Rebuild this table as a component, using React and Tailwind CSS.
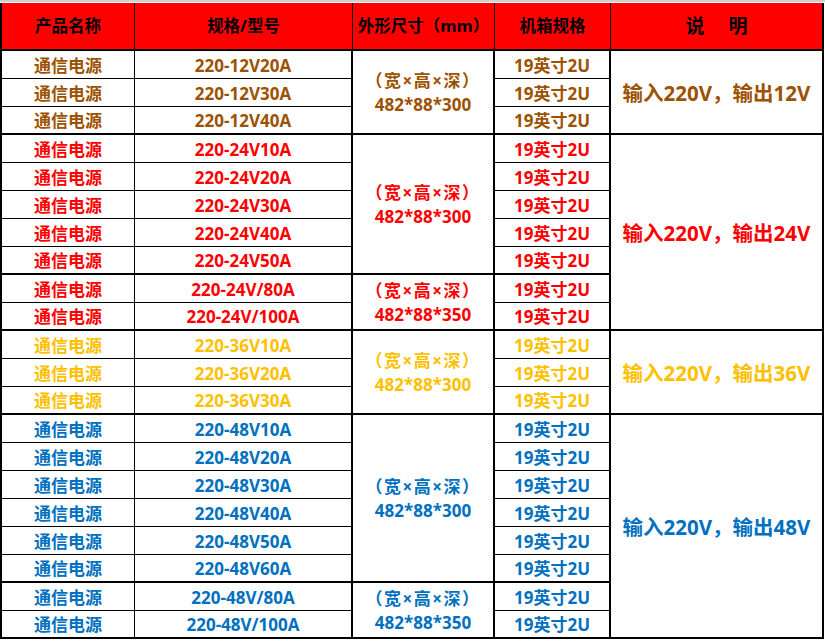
const groups = [
  {
    color: 'text-[#9c5200]',
    note: '输入220V，输出12V',
    subs: [{ span: 'row-span-3', depth: '300', models: ['220-12V20A', '220-12V30A', '220-12V40A'] }],
  },
  {
    color: 'text-[#ff0000]',
    note: '输入220V，输出24V',
    subs: [
      { span: 'row-span-5', depth: '300', models: ['220-24V10A', '220-24V20A', '220-24V30A', '220-24V40A', '220-24V50A'] },
      { span: 'row-span-2', depth: '350', models: ['220-24V/80A', '220-24V/100A'] },
    ],
  },
  {
    color: 'text-[#ffc000]',
    note: '输入220V，输出36V',
    subs: [{ span: 'row-span-3', depth: '300', models: ['220-36V10A', '220-36V20A', '220-36V30A'] }],
  },
  {
    color: 'text-[#0070c0]',
    note: '输入220V，输出48V',
    subs: [
      { span: 'row-span-6', depth: '300', models: ['220-48V10A', '220-48V20A', '220-48V30A', '220-48V40A', '220-48V50A', '220-48V60A'] },
      { span: 'row-span-2', depth: '350', models: ['220-48V/80A', '220-48V/100A'] },
    ],
  },
];

const noteSpan = { 3: 'row-span-3', 7: 'row-span-7', 8: 'row-span-8' };

const head = 'flex items-center justify-center bg-[#ff0000] text-black border-b-2 border-black text-[16.5px] pt-[1px]';

function Cell({ className = '', children }) {
  return <div className={`flex items-center justify-center border-black whitespace-nowrap ${className}`}>{children}</div>;
}

export default function App() {
  const cells = [];
  groups.forEach((g, gi) => {
    const total = g.subs.reduce((n, s) => n + s.models.length, 0);
    let first = true;
    g.subs.forEach((s, si) => {
      s.models.forEach((m, mi) => {
        const last = mi === s.models.length - 1;
        const bb = last ? 'border-b-2' : 'border-b';
        const k = `${gi}-${si}-${mi}`;
        cells.push(
          <Cell key={k + 'a'} className={`${g.color} ${bb} border-r pt-[2px]`}>通信电源</Cell>,
          <Cell key={k + 'b'} className={`${g.color} ${bb} border-r-2 pt-[2px]`}>{m}</Cell>
        );
        if (mi === 0) {
          cells.push(
            <Cell key={k + 'c'} className={`${g.color} ${s.span} border-b-2 border-r-2 flex-col leading-[24px] pt-[2px]`}>
              <span className="tracking-[1.5px]">（宽×高×深）</span>
              <span>482*88*{s.depth}</span>
            </Cell>
          );
        }
        cells.push(<Cell key={k + 'd'} className={`${g.color} ${bb} border-r-2 pt-[2px]`}>19英寸2U</Cell>);
        if (first) {
          cells.push(
            <Cell key={k + 'e'} className={`${g.color} ${noteSpan[total]} border-b-2 border-r-2 text-[20.5px] pt-[2px]`}>
              {g.note}
            </Cell>
          );
          first = false;
        }
      });
    });
  });

  return (
    <div className="min-h-screen bg-white font-['Open_Sans','Noto_Sans_CJK_SC',sans-serif] font-bold text-[17px]">
      <div className="h-[2px] bg-[#d0d0d0]" />
      <div className="mt-[1px] w-[824px] border-l-2 border-black grid grid-cols-[133px_218px_142px_116px_213px] grid-rows-[48px_repeat(21,28px)]">
        <div className={`${head} border-r`}>产品名称</div>
        <div className={`${head} border-r`}>规格/型号</div>
        <div className={`${head} border-r whitespace-nowrap`}>外形尺寸（mm）</div>
        <div className={`${head} border-r`}>机箱规格</div>
        <div className={`${head} border-r-2 text-[19px] gap-[24px]`}>
          <span>说</span>
          <span>明</span>
        </div>
        {cells}
      </div>
    </div>
  );
}
